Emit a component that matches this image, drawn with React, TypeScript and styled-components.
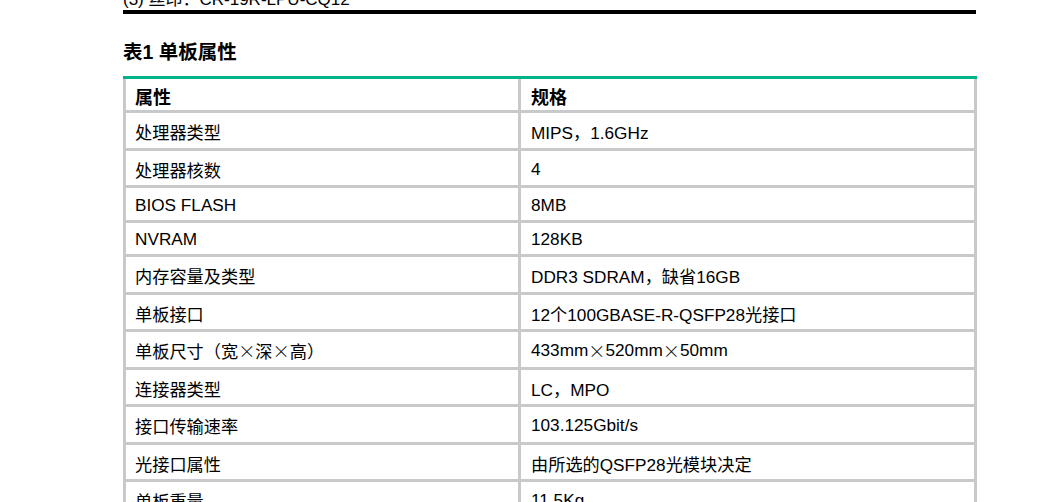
import React from 'react';
import styled, { createGlobalStyle } from 'styled-components';

const GlobalStyle = createGlobalStyle`
  body {
    margin: 0;
    background: #ffffff;
    font-family: 'Liberation Sans', 'Noto Sans CJK SC', sans-serif;
    color: #000000;
  }
`;

interface Row {
  name: React.ReactNode;
  spec: React.ReactNode;
  tall: boolean;
}

// full-width multiplication sign, as the CJK font draws it in the document
const Times = styled.span`
  display: inline-block;
  width: 1em;
  text-align: center;
  font-family: 'Noto Sans CJK SC', sans-serif;
  font-weight: 300;
`;

const rows: Row[] = [
  { name: '处理器类型', spec: 'MIPS，1.6GHz', tall: true },
  { name: '处理器核数', spec: '4', tall: true },
  { name: 'BIOS FLASH', spec: '8MB', tall: false },
  { name: 'NVRAM', spec: '128KB', tall: false },
  { name: '内存容量及类型', spec: 'DDR3 SDRAM，缺省16GB', tall: true },
  { name: '单板接口', spec: '12个100GBASE-R-QSFP28光接口', tall: true },
  {
    name: (
      <>
        单板尺寸（宽<Times>×</Times>深<Times>×</Times>高）
      </>
    ),
    spec: (
      <>
        433mm<Times>×</Times>520mm<Times>×</Times>50mm
      </>
    ),
    tall: true,
  },
  { name: '连接器类型', spec: 'LC，MPO', tall: true },
  { name: '接口传输速率', spec: '103.125Gbit/s', tall: true },
  { name: '光接口属性', spec: '由所选的QSFP28光模块决定', tall: true },
  { name: '单板重量', spec: '11.5Kg', tall: true },
];

export default function App() {
  return (
    <>
      <GlobalStyle />
      <Page>
        <Crumb>(3) 丝印：CR-19R-LPU-CQ12</Crumb>
        <Rule />
        <Caption>表1 单板属性</Caption>
        <Table>
          <Cell $head $first>属性</Cell>
          <Cell $head>规格</Cell>
          {rows.map((row, i) => (
            <React.Fragment key={i}>
              <Cell $first $tall={row.tall}>{row.name}</Cell>
              <Cell $tall={row.tall}>{row.spec}</Cell>
            </React.Fragment>
          ))}
        </Table>
      </Page>
    </>
  );
}

const Page = styled.div`
  width: 854px;
  height: 502px;
  padding-left: 123px;
  overflow: hidden;
`;

const Crumb = styled.div`
  font-size: 17px;
  line-height: 20px;
  margin-top: -10px;
  white-space: nowrap;
`;

const Rule = styled.div`
  height: 4px;
  width: 853px;
  background: #000000;
`;

const Caption = styled.h3`
  font-size: 19.5px;
  font-weight: bold;
  line-height: 24px;
  margin: 26px 0 12px;
`;

const Table = styled.div`
  display: grid;
  grid-template-columns: 392px 453px;
  gap: 3px;
  padding: 0 3px;
  background: #c8c9ca;
  border-top: 3px solid #00b388;
`;

const Cell = styled.div<{ $head?: boolean; $first?: boolean; $tall?: boolean }>`
  background: #ffffff;
  display: flex;
  align-items: center;
  box-sizing: border-box;
  height: ${(p) => (p.$head ? '31px' : p.$tall ? '34.5px' : '31.5px')};
  padding: 3px 0 0 ${(p) => (p.$first ? '9px' : '10px')};
  font-size: ${(p) => (p.$head ? '18px' : '17.2px')};
  font-weight: ${(p) => (p.$head ? 'bold' : 'normal')};
  white-space: nowrap;
`;
